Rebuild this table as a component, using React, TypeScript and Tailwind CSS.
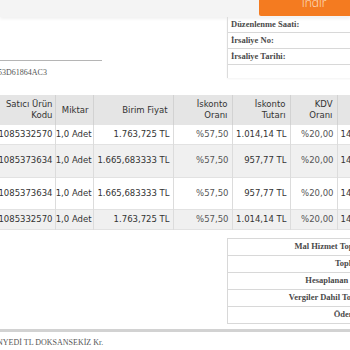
const rows = [
  { code: "E1085332570", qty: "1,0 Adet", price: "1.763,725 TL", disc: "%57,50", discAmt: "1.014,14 TL", vat: "%20,00", total: "149,92 TL", h: "h-[19px]", bg: "bg-white" },
  { code: "E1085373634", qty: "1,0 Adet", price: "1.665,683333 TL", disc: "%57,50", discAmt: "957,77 TL", vat: "%20,00", total: "141,58 TL", h: "h-[33px]", bg: "bg-[#f0f0f0]" },
  { code: "E1085373634", qty: "1,0 Adet", price: "1.665,683333 TL", disc: "%57,50", discAmt: "957,77 TL", vat: "%20,00", total: "141,58 TL", h: "h-[32px]", bg: "bg-white" },
  { code: "E1085332570", qty: "1,0 Adet", price: "1.763,725 TL", disc: "%57,50", discAmt: "1.014,14 TL", vat: "%20,00", total: "149,92 TL", h: "h-[20px]", bg: "bg-[#f0f0f0]" },
];

const infoRows = ["Düzenlenme Saati:", "İrsaliye No:", "İrsaliye Tarihi:"];

const totals = [
  "Mal Hizmet Toplam Tutarı",
  "Toplam İskonto",
  "Hesaplanan KDV(%20)",
  "Vergiler Dahil Toplam Tutar",
  "Ödenecek Tutar",
];

export default function App() {
  return (
    <div className="relative w-[350px] h-[350px] overflow-hidden bg-white">
      {/* top bar */}
      <div className="h-[17px] bg-[#f4f4f4] shadow-[0_2px_3px_rgba(0,0,0,0.06)] flex justify-end">
        <button className="w-[110px] shrink-0 -mr-[19px] h-[16px] bg-[#f47b20] rounded-bl-[2px] flex justify-center overflow-hidden">
          <span className="-mt-[6px] text-[12px] font-light text-[#fde2cc] font-['Open_Sans',sans-serif]">İndir</span>
        </button>
      </div>

      {/* head area */}
      <div className="flex">
        <div className="w-[227px] shrink-0 pt-[43px]">
          <div className="w-[102px] h-px bg-[#b5b5b5]" />
          <div className="-ml-[2px] mt-[7px] text-[8px] leading-[10px] text-[#555] font-['Liberation_Serif',serif]">53D61864AC3</div>
        </div>
        <div className="w-[140px] shrink-0 border-l border-[#dcdcdc] shadow-[0_1px_2px_rgba(0,0,0,0.05)]">
          {infoRows.map((r) => (
            <div key={r} className="h-[16px] border-b border-[#d8d8d8] flex items-center pl-[3px] text-[8.5px] font-bold text-[#4a4a4a] font-['Liberation_Serif',serif]">
              {r}
            </div>
          ))}
        </div>
      </div>

      {/* product table */}
      <div className="mt-[17px] -ml-[20px] w-[420px]">
        <table className="table-fixed border-collapse text-[8.5px] text-[#333] font-['DejaVu_Sans',sans-serif]">
          <colgroup>
            <col className="w-[75px]" />
            <col className="w-[38px]" />
            <col className="w-[80px]" />
            <col className="w-[59px]" />
            <col className="w-[58px]" />
            <col className="w-[47px]" />
            <col className="w-[60px]" />
          </colgroup>
          <thead>
            <tr className="h-[30px] bg-[#e5e5e5] text-right leading-[11px]">
              <th className="font-normal border-r border-[#d2d2d2] pr-[2px]">Satıcı Ürün<br />Kodu</th>
              <th className="font-normal border-r border-[#d2d2d2] pr-[4px]">Miktar</th>
              <th className="font-normal border-r border-[#d2d2d2] pr-[5px]">Birim Fiyat</th>
              <th className="font-normal border-r border-[#d2d2d2] pr-[4px]">İskonto<br />Oranı</th>
              <th className="font-normal border-r border-[#d2d2d2] pr-[4px]">İskonto<br />Tutarı</th>
              <th className="font-normal border-r border-[#d2d2d2] pr-[4px]">KDV<br />Oranı</th>
              <th className="font-normal pr-[4px]">KDV<br />Tutarı</th>
            </tr>
          </thead>
          <tbody>
            {rows.map((r, i) => (
              <tr key={i} className={`${r.h} ${r.bg} text-right border-b border-[#e2e2e2]`}>
                <td className="border-r border-[#dcdcdc] pr-[2px]">{r.code}</td>
                <td className="border-r border-[#dcdcdc] pr-[1px]">{r.qty}</td>
                <td className="border-r border-[#dcdcdc] pr-[3px]">{r.price}</td>
                <td className="border-r border-[#dcdcdc] pr-[3px] text-[#555]">{r.disc}</td>
                <td className="border-r border-[#dcdcdc] pr-[3px]">{r.discAmt}</td>
                <td className="border-r border-[#dcdcdc] pr-[3px] text-[#555]">{r.vat}</td>
                <td className="text-left pl-[3px]">{r.total}</td>
              </tr>
            ))}
          </tbody>
        </table>
      </div>

      {/* totals */}
      <div className="mt-[8px] ml-[227px] w-[200px] border-l border-t border-[#d8d8d8]">
        {totals.map((t) => (
          <div key={t} className="h-[17px] border-b border-[#d8d8d8] flex items-center">
            <div className="w-[168px] shrink-0 pr-[4px] text-right text-[8.5px] font-bold text-[#4a4a4a] whitespace-nowrap font-['Liberation_Serif',serif]">
              {t}
            </div>
          </div>
        ))}
      </div>

      <div className="mt-[5px] h-[3px] bg-[#d2d2d2]" />
      <div className="-ml-[3px] mt-[6px] text-[8px] leading-[10px] text-[#555] whitespace-nowrap font-['Liberation_Serif',serif]">
        NYEDİ TL DOKSANSEKİZ Kr.
      </div>
    </div>
  );
}
